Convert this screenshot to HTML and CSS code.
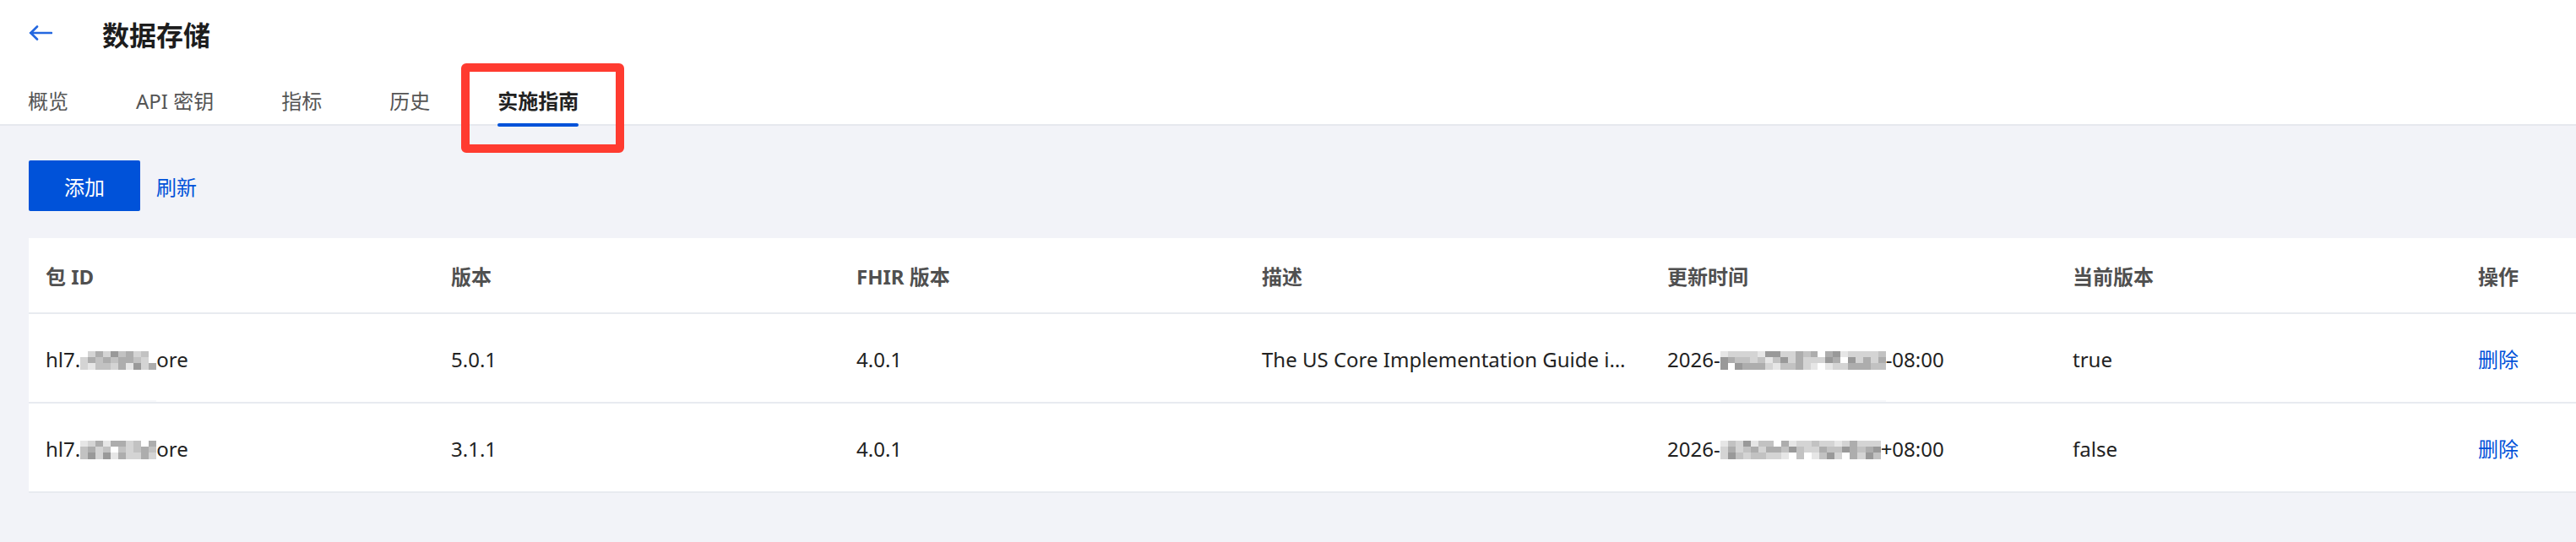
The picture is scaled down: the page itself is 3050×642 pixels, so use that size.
FILE: index.html
```html
<!DOCTYPE html>
<html lang="zh">
<head>
    <meta charset="UTF-8">
    <meta name="viewport" content="width=device-width, initial-scale=1.0">
    <title>数据存储</title>
    <link rel="stylesheet" href="styles.css">
</head>
<body>
    <div class="page-header">
        <div class="title-row">
            <svg class="back" width="28" height="18" viewBox="0 0 28 18">
                <path d="M27 9H2M10 1.5L2.4 9l7.6 7.5" fill="none" stroke="#2468e0" stroke-width="2.6" stroke-linecap="round" stroke-linejoin="round"/>
            </svg>
            <h1 class="title">数据存储</h1>
        </div>
        <div class="tabs">
            <div class="tab">概览</div>
            <div class="tab">API 密钥</div>
            <div class="tab">指标</div>
            <div class="tab">历史</div>
            <div class="tab active">实施指南<span class="highlight"></span></div>
        </div>
    </div>

    <div class="content">
        <div class="toolbar">
            <button class="btn-primary">添加</button>
            <a class="link">刷新</a>
        </div>

        <table class="data-table">
            <colgroup>
                <col class="col"><col class="col"><col class="col"><col class="col"><col class="col"><col class="col"><col>
            </colgroup>
            <thead>
                <tr>
                    <th>包 ID</th>
                    <th>版本</th>
                    <th>FHIR 版本</th>
                    <th>描述</th>
                    <th>更新时间</th>
                    <th>当前版本</th>
                    <th>操作</th>
                </tr>
            </thead>
            <tbody>
                <tr>
                    <td>hl7.<span class="mosaic m-id patch"></span>ore</td>
                    <td>5.0.1</td>
                    <td>4.0.1</td>
                    <td>The US Core Implementation Guide is based on FHIR Version R4</td>
                    <td>2026-<span class="mosaic m-date patch"></span>-08:00</td>
                    <td>true</td>
                    <td><a class="link">删除</a></td>
                </tr>
                <tr>
                    <td>hl7.<span class="mosaic m-id"></span>ore</td>
                    <td>3.1.1</td>
                    <td>4.0.1</td>
                    <td></td>
                    <td>2026-<span class="mosaic m-date2"></span>+08:00</td>
                    <td>false</td>
                    <td><a class="link">删除</a></td>
                </tr>
            </tbody>
        </table>
    </div>

    <script>
        // 打码区域：按宽度生成灰色马赛克方块
        var shades = ["c0", "c1", "c2", "c3", "c4", "c5"];
        var blocks = document.querySelectorAll(".mosaic");
        for (var n = 0; n < blocks.length; n++) {
            var el = blocks[n];
            var cols = Math.round(el.offsetWidth / 9);
            var seed = n * 7919 + 101;
            for (var i = 0; i < cols * 3; i++) {
                seed = (seed * 16807) % 2147483647;
                var r = seed / 2147483647;
                var k = r < 0.06 ? 0 : r < 0.2 ? 1 : r < 0.45 ? 2 : r < 0.7 ? 3 : r < 0.9 ? 4 : 5;
                var cell = document.createElement("span");
                cell.className = shades[k];
                el.appendChild(cell);
            }
        }
    </script>
</body>
</html>
```

FILE: styles.css
```css
body {
    margin: 0;
    font-family: "Noto Sans", "Noto Sans CJK SC", sans-serif;
    font-size: 24px;
    color: #222;
    background-color: #f2f3f8;
}
.page-header {
    background: #fff;
    padding-left: 33px;
    border-bottom: 2px solid #e6e8ee;
}
.title-row {
    display: flex;
    align-items: center;
    height: 84px;
}
.back {
    margin: 0 0 6px 1px;
}
.title {
    margin: 0 0 0 59px;
    font-size: 32px;
    font-weight: 700;
    line-height: 40px;
    color: #1d1d1d;
}
.tabs {
    display: flex;
    gap: 80px;
}
.tab {
    position: relative;
    padding: 17px 0 8px;
    line-height: 38px;
    color: #555;
}
.tab.active {
    font-weight: 700;
    color: #222;
}
.tab.active::after {
    content: "";
    position: absolute;
    left: 0;
    right: 0;
    bottom: -3px;
    height: 4px;
    border-radius: 2px;
    background: #0052d9;
}
.highlight {
    position: absolute;
    left: -43px;
    top: -9px;
    width: 193px;
    height: 106px;
    box-sizing: border-box;
    border: 10px solid #ff3b30;
    border-radius: 6px;
}
.content {
    padding: 41px 0 0 34px;
}
.toolbar {
    display: flex;
    align-items: center;
    margin-bottom: 32px;
}
.btn-primary {
    width: 132px;
    height: 60px;
    border: none;
    border-radius: 2px;
    background: #0052d9;
    color: #fff;
    font-family: inherit;
    font-size: 24px;
    cursor: pointer;
}
.link {
    color: #0052d9;
    cursor: pointer;
}
.toolbar .link {
    margin-left: 19px;
}
.data-table {
    width: 100%;
    table-layout: fixed;
    border-collapse: collapse;
    background: #fff;
}
.data-table .col {
    width: 480px;
}
.data-table th,
.data-table td {
    padding: 4px 20px 0;
    border-bottom: 2px solid #e8ebf0;
    text-align: left;
    line-height: 36px;
    white-space: nowrap;
    overflow: hidden;
    text-overflow: ellipsis;
}
.data-table th {
    font-weight: 700;
    color: #505050;
}
.data-table thead tr {
    height: 89px;
}
.data-table tbody tr {
    height: 106px;
}
.mosaic {
    position: relative;
    display: inline-grid;
    grid-template-rows: repeat(3, 1fr);
    grid-auto-flow: column;
    grid-auto-columns: 1fr;
    height: 22px;
    margin-bottom: 4px;
    vertical-align: middle;
}
.m-id {
    width: 90px;
}
.m-date {
    width: 196px;
}
.m-date2 {
    width: 190px;
}
.mosaic.patch::after {
    content: "";
    position: absolute;
    left: 0;
    right: 0;
    top: calc(100% + 36px);
    height: 6px;
    background: #f7f8fa;
}
.c0 { background: #fff; }
.c1 { background: #e6e6e6; }
.c2 { background: #d4d4d4; }
.c3 { background: #c2c2c2; }
.c4 { background: #adadad; }
.c5 { background: #999; }
```
